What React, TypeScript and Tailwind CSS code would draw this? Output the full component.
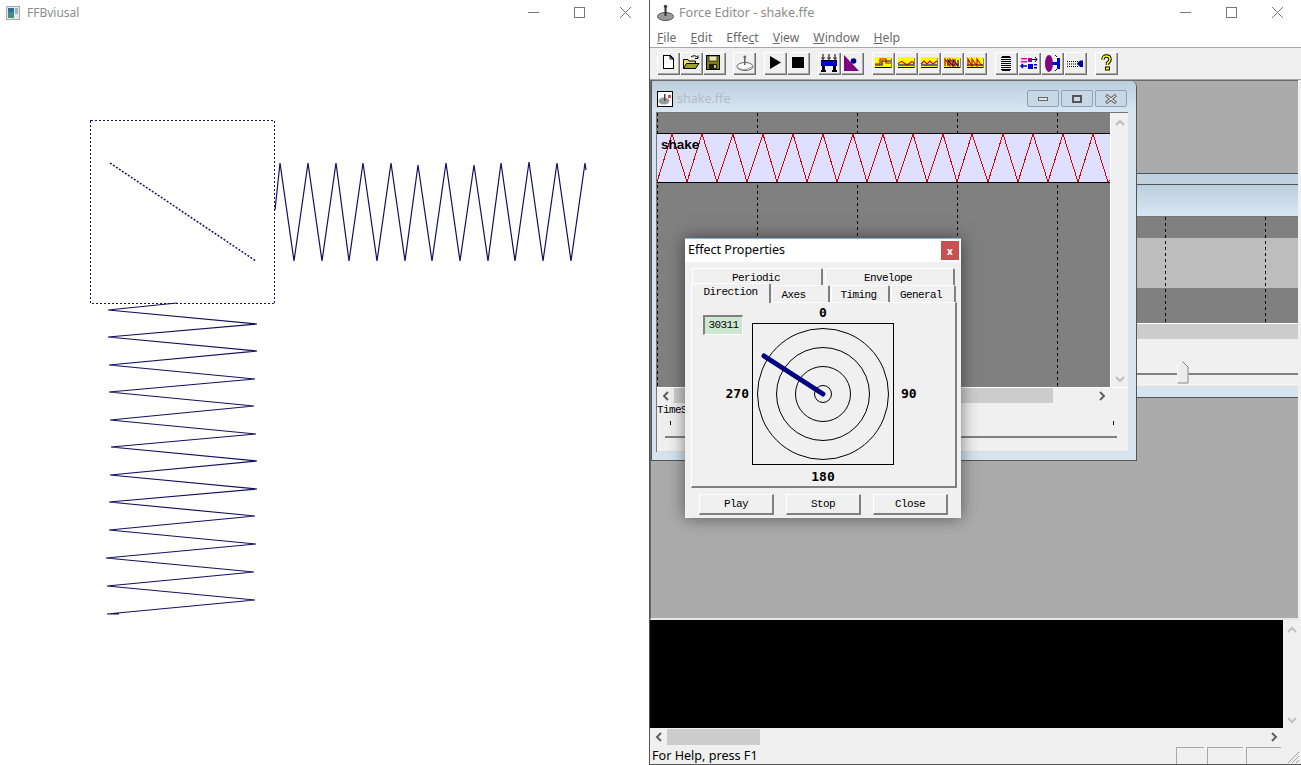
import React from "react";

const zigV: [number, number][] = [[177,303],[108,310],[257,324],[108,337],[257,351],[109,365],[255,379],[109,392],[254,406],[110,420],[256,434],[111,447],[257,461],[110,475],[257,489],[109,502],[255,516],[109,530],[256,544],[106,558],[254,572],[107,586],[255,600],[107,614],[119,614]];
const zigH: [number, number][] = [[275,210],[280,163],[294,261],[308,163],[322,261],[336,163],[349,261],[363,163],[377,261],[391,163],[405,261],[418,165],[432,261],[446,163],[460,261],[474,165],[488,261],[501,163],[515,261],[529,162],[543,261],[557,163],[571,261],[585,163],[586,170]];
const pts = (a: [number, number][]) => a.map((p) => p.join(",")).join(" ");

function tri() {
  const peaks = [15,45,76,106,136,166,196,226,256,286,315,346,376,406,436];
  const troughs = [30,60,90,120,150,180,210,240,270,300,331,361,391,421,451];
  const out: string[] = ["0,48"];
  peaks.forEach((p, i) => { out.push(`${p},0`); out.push(`${troughs[i]},48`); });
  out.push("453,46");
  return out.join(" ");
}

const Caption = () => (
  <div className="flex items-center mr-[1px]">
    <svg width="46" height="26" viewBox="0 0 46 26"><line x1="18" y1="12.5" x2="29" y2="12.5" stroke="#777" /></svg>
    <svg width="46" height="26" viewBox="0 0 46 26"><rect x="18.5" y="7.5" width="10" height="10" fill="none" stroke="#777" /></svg>
    <svg width="46" height="26" viewBox="0 0 46 26"><path d="M18 7 L29 18 M29 7 L18 18" stroke="#777" /></svg>
  </div>
);

const Chev = ({ dir, color }: { dir: "u" | "d" | "l" | "r"; color: string }) => {
  const d = { u: "M1 7 L5 3 L9 7", d: "M1 3 L5 7 L9 3", l: "M7 1 L3 5 L7 9", r: "M3 1 L7 5 L3 9" }[dir];
  return <svg width="10" height="10" viewBox="0 0 10 10"><path d={d} fill="none" stroke={color} strokeWidth="2" /></svg>;
};

const Tool = ({ children, ml }: { children: React.ReactNode; ml?: string }) => (
  <div className={`w-[23px] h-[23px] shrink-0 bg-[#f0f0f0] shadow-[inset_1px_1px_0_#ffffff,inset_-1px_-1px_0_#707070,inset_-2px_-2px_0_#a8a8a8] ${ml ?? ""}`}>
    <svg width="23" height="23" viewBox="0 0 23 23">{children}</svg>
  </div>
);

const Wave = ({ top, bottom }: { top: string; bottom: string }) => (
  <g transform="translate(0,-1)">
    <rect x="3" y="6" width="16" height="10" fill="#ffff00" />
    <rect x="3" y="16" width="16" height="1" fill="#000" />
    <rect x="19" y="7" width="1" height="10" fill="#808080" />
    <path d={bottom} fill="none" stroke="#0000d0" strokeWidth="1.2" />
    <path d={top} fill="none" stroke="#d00000" strokeWidth="1.2" />
  </g>
);

const Tab = ({ label, cls }: { label: string; cls: string }) => (
  <div className={`${cls} flex items-center justify-center bg-[#f0f0f0] border-t border-l border-white border-r-2 border-r-[#808080] rounded-t-[2px] font-['Liberation_Mono',monospace] text-[11px] tracking-[-0.6px] text-black`}>
    {label}
  </div>
);

const DlgBtn = ({ label }: { label: string }) => (
  <div className="w-[75px] h-[21px] pt-[1px] flex items-center justify-center bg-[#f0f0f0] border-t border-l border-white border-r-2 border-b-2 border-r-[#808080] border-b-[#808080] font-['Liberation_Mono',monospace] text-[11px] tracking-[-0.6px] text-black">
    {label}
  </div>
);

const Mdib = ({ children }: { children: React.ReactNode }) => (
  <div className="w-[32px] h-[17px] flex items-center justify-center rounded-[2px] border border-[#8fa3b8] bg-[#c6d7e5]">{children}</div>
);

export default function App() {
  return (
    <div className="flex w-[1301px] h-[765px] overflow-hidden bg-white font-['Noto_Sans',sans-serif]">
      {/* Left window */}
      <div className="w-[649px] h-full shrink-0 flex flex-col bg-white">
        <div className="h-[26px] shrink-0 flex items-center">
          <svg className="ml-[6px]" width="14" height="14" viewBox="0 0 14 14">
            <rect x="0.5" y="0.5" width="13" height="13" fill="#e8e8e8" stroke="#a8a8a8" />
            <rect x="2" y="2" width="6" height="10" fill="#3f8f86" />
            <rect x="2" y="2" width="6" height="4" fill="#2f6f9f" />
            <rect x="9" y="2" width="3" height="6" fill="#9fb4c8" />
          </svg>
          <span className="ml-[7px] text-[12px] leading-none text-[#8c8c8c]">FFBviusal</span>
          <div className="ml-auto"><Caption /></div>
        </div>
        <svg className="block" width="649" height="739" viewBox="0 26 649 739">
          <rect x="90.5" y="120.5" width="184" height="183" fill="none" stroke="#14105e" strokeDasharray="2 2" shapeRendering="crispEdges" />
          <line x1="110" y1="163" x2="256" y2="261" stroke="#14105e" strokeWidth="1.5" strokeDasharray="2 1.6" />
          <polyline points={pts(zigH)} fill="none" stroke="#14105e" strokeWidth="1.2" />
          <polyline points={pts(zigV)} fill="none" stroke="#14105e" strokeWidth="1.2" />
        </svg>
      </div>

      {/* Right window */}
      <div className="w-[652px] h-full shrink-0 flex flex-col border-l border-b border-[#555555] bg-[#f0f0f0]">
        <div className="h-[26px] shrink-0 flex items-center bg-white">
          <svg className="ml-[7px]" width="18" height="18" viewBox="0 0 18 18">
            <ellipse cx="8.5" cy="12.5" rx="8" ry="4" fill="#9a9a9a" stroke="#555" />
            <rect x="7.5" y="2" width="2" height="10" fill="#333" />
            <circle cx="8.5" cy="2.5" r="1.8" fill="#444" />
          </svg>
          <span className="ml-[4px] text-[12.6px] leading-none text-[#8c8c8c]">Force Editor - shake.ffe</span>
          <div className="ml-auto"><Caption /></div>
        </div>
        <div className="h-[21px] shrink-0 flex items-center bg-white pl-[7px] pt-[4px] gap-[14px] text-[12.2px] leading-none text-[#6a6a6a]">
          <span><u>F</u>ile</span>
          <span><u>E</u>dit</span>
          <span>Effe<u>c</u>t</span>
          <span><u>V</u>iew</span>
          <span><u>W</u>indow</span>
          <span><u>H</u>elp</span>
        </div>
        <div className="h-[33px] shrink-0 flex items-center pl-[7px] bg-[#f0f0f0] border-t border-b border-[#a8a8a8]">
          <Tool>
            <path d="M6.5 3.5 H13 L16.5 7 V16.5 H6.5 Z" fill="#fff" stroke="#000" shapeRendering="crispEdges" />
            <path d="M13 3.5 V7 H16.5" fill="none" stroke="#000" />
          </Tool>
          <Tool>
            <path d="M3.5 7.5 H8 L9 9 H15.5 V16.5 H3.5 Z" fill="#e6e066" stroke="#000" />
            <path d="M3.5 16.5 L6.5 11.5 H19 L15.5 16.5 Z" fill="#a0a030" stroke="#000" />
            <path d="M11 5 Q15 2 18 6 M18 3.5 V6.5 H15" fill="none" stroke="#000" />
          </Tool>
          <Tool>
            <rect x="3.5" y="3.5" width="13" height="14" fill="#808000" stroke="#000" />
            <rect x="6" y="4" width="8" height="5" fill="#e8e8c8" stroke="#000" strokeWidth="0.6" />
            <rect x="6" y="12" width="8" height="5" fill="#202000" />
            <rect x="11" y="13" width="2" height="3" fill="#c0c0a0" />
          </Tool>
          <Tool ml="ml-[7px]">
            <ellipse cx="12" cy="14.5" rx="8" ry="4" fill="#fff" stroke="#666" />
            <rect x="11" y="5" width="1.5" height="8" fill="#666" />
            <circle cx="11.8" cy="5" r="1.4" fill="#666" />
            <path d="M4 15 Q10 20 19 15" fill="none" stroke="#999" />
          </Tool>
          <Tool ml="ml-[8px]">
            <path d="M6 4 L17 10.5 L6 17 Z" fill="#000" />
          </Tool>
          <Tool>
            <rect x="5" y="5" width="12" height="11" fill="#000" />
          </Tool>
          <Tool ml="ml-[8px]">
            <path d="M5 2 V7 M11 2 V7 M17 2 V7 M3.5 5.5 L5 7.5 L6.5 5.5 M9.5 5.5 L11 7.5 L12.5 5.5 M15.5 5.5 L17 7.5 L18.5 5.5" fill="none" stroke="#000" />
            <rect x="3" y="9" width="16" height="5" fill="#0000d0" />
            <rect x="3" y="8" width="16" height="1" fill="#000" />
            <rect x="4" y="14" width="3" height="4" fill="#000" />
            <rect x="15" y="14" width="3" height="4" fill="#000" />
            <rect x="3" y="18" width="5" height="2" fill="#000" />
            <rect x="14" y="18" width="5" height="2" fill="#000" />
          </Tool>
          <Tool>
            <path d="M3 3 L18 19 H3 Z" fill="#800080" />
            <circle cx="12.5" cy="9" r="2.8" fill="#000090" />
          </Tool>
          <Tool ml="ml-[8px]">
            <Wave top="M3 13 H8 V8 H14 V12 H19" bottom="M3 14 H10 V10 H19" />
          </Tool>
          <Tool>
            <Wave top="M3 13 Q6 9 9 12 T15 12 T19 13" bottom="M3 14 H19" />
          </Tool>
          <Tool>
            <Wave top="M3 13 L6 10 L9 13 L12 10 L15 13 L19 10" bottom="M3 14 H19" />
          </Tool>
          <Tool>
            <Wave top="M4 15 V8 L9 15 V8 L14 15 V8" bottom="M7 15 V9 L12 15 V9 L17 15 V9" />
          </Tool>
          <Tool>
            <Wave top="M4 15 V8 L8 15 V8 L13 15 V8 L18 15" bottom="M3 14 H19" />
          </Tool>
          <Tool ml="ml-[8px]">
            <path d="M6 5.5 H16 M6 7.5 H16 M6 9.5 H16 M6 11.5 H16 M6 13.5 H16 M6 15.5 H16 M6 17.5 H16" stroke="#000" strokeWidth="1.2" />
            <path d="M7 4.5 H15 M7 18.5 H15" stroke="#000" />
          </Tool>
          <Tool>
            <rect x="3" y="6" width="6" height="1.5" fill="#f000d0" />
            <rect x="3" y="9" width="6" height="1.5" fill="#f000d0" />
            <rect x="10" y="6" width="4" height="4" fill="#a000a0" />
            <path d="M14 7.5 H19 M17 5 L19 7.5 L17 10" fill="none" stroke="#000" />
            <rect x="10" y="12" width="5" height="5" fill="#0000d0" />
            <path d="M3 14 H9 M5 12 L3 14 L5 16" fill="none" stroke="#0000d0" strokeWidth="1.5" />
            <rect x="16" y="12" width="3" height="1.5" fill="#0000d0" />
            <rect x="16" y="15" width="3" height="1.5" fill="#000" />
          </Tool>
          <Tool>
            <ellipse cx="8" cy="11.5" rx="4" ry="8.5" fill="#800080" />
            <path d="M11 10 H16 V6 H19 V17 H16 V13 H11 Z" fill="#0000d0" />
            <path d="M14 3 L16 5 M14 19 L16 17" stroke="#0000d0" />
          </Tool>
          <Tool>
            <path d="M3 9.5 H14 M3 12 H14 M3 14.5 H14" stroke="#000" strokeDasharray="1 1" />
            <path d="M13 11.5 L16 8.5 H19 V15 H16 Z" fill="#0000a0" />
          </Tool>
          <Tool ml="ml-[8px]">
            <path d="M8 7.5 Q8 4 11.5 4 Q15 4 15 7.5 Q15 9.5 12.5 11 V13" fill="none" stroke="#000" strokeWidth="3.4" />
            <path d="M8 7.5 Q8 4 11.5 4 Q15 4 15 7.5 Q15 9.5 12.5 11 V13" fill="none" stroke="#ffff00" strokeWidth="1.6" />
            <rect x="10.5" y="15" width="4" height="3" fill="#ffff00" stroke="#000" />
          </Tool>
        </div>

        {/* MDI area */}
        <div className="relative h-[540px] w-[648px] shrink-0 overflow-hidden bg-[#ababab] border-t border-l border-t-[#696969] border-l-[#696969] border-b-2 border-b-[#e8e8e8]">
          {/* back child */}
          <div className="absolute left-[249px] top-[92px] w-[398px] h-[225px] flex flex-col border-t border-b border-[#555555] bg-[#d6e4f2]">
            <div className="h-[11px] shrink-0 bg-[#c0d1df] border-b border-[#555555]" />
            <div className="h-[31px] shrink-0 bg-gradient-to-b from-[#bccedd] to-[#d8e6f3]" />
            <div className="relative h-[107px] shrink-0 bg-[#808080] border-t border-[#777777] flex flex-col">
              <div className="h-[21px] shrink-0" />
              <div className="h-[50px] shrink-0 bg-[#bdbdbd]" />
              <svg className="absolute inset-0" width="398" height="107">
                <path d="M265.5 0 V107 M365.5 0 V107" stroke="#000" strokeDasharray="3 3" shapeRendering="crispEdges" />
              </svg>
            </div>
            <div className="h-[16px] shrink-0 bg-[#cdcdcd] border-t border-white" />
            <div className="relative h-[48px] shrink-0 bg-[#f0f0f0] border-b border-[#dcdcdc]">
              <div className="mt-[34px] h-[2px] bg-[#808080]" />
              <svg className="absolute left-[277px] top-[22px]" width="12" height="23" viewBox="0 0 12 23">
                <path d="M0.5 6 L5.5 0.5 L11 6 V22 H0.5 Z" fill="#ececec" stroke="#fff" />
                <path d="M5.5 0.5 L11 6 V22 H0.5" fill="none" stroke="#808080" />
              </svg>
            </div>
          </div>

          {/* front child */}
          <div className="absolute left-0 top-0 w-[486px] h-[380px] flex flex-col border-l border-r border-b border-[#555555] rounded-tr-[6px] bg-[#d6e4f2]">
            <div className="h-[31px] shrink-0 flex items-start bg-gradient-to-b from-[#bccedd] to-[#d8e6f3] rounded-tr-[6px]">
              <svg className="ml-[5px] mt-[10px]" width="16" height="16" viewBox="0 0 16 16">
                <rect x="0.5" y="0.5" width="15" height="15" fill="#fff" stroke="#000" />
                <ellipse cx="7" cy="10" rx="5.5" ry="3.5" fill="#999" />
                <rect x="7" y="3" width="1.5" height="7" fill="#444" />
                <rect x="11" y="4" width="3" height="3" fill="#d85050" />
              </svg>
              <span className="ml-[4px] mt-[11px] text-[12.5px] leading-[14px] text-[#b4bcc4]">shake.ffe</span>
              <div className="ml-auto mr-[9px] mt-[9px] flex gap-[2px]">
                <Mdib><div className="w-[10px] h-[4px] bg-[#e4e4e4] border border-[#666]" /></Mdib>
                <Mdib><div className="w-[10px] h-[8px] border-2 border-[#555]" /></Mdib>
                <Mdib>
                  <svg width="12" height="10" viewBox="0 0 12 10">
                    <path d="M1 1 L11 9 M11 1 L1 9" stroke="#555" strokeWidth="3" />
                    <path d="M1.5 1.5 L10.5 8.5 M10.5 1.5 L1.5 8.5" stroke="#e8e8e8" strokeWidth="1.2" />
                  </svg>
                </Mdib>
              </div>
            </div>
            <div className="h-[340px] shrink-0 ml-[4px] mr-[8px] flex flex-col bg-[#f0f0f0] border-t border-l border-[#777777]">
              <div className="h-[274px] shrink-0 flex">
                <div className="relative w-[453px] h-full shrink-0 bg-[#808080] pt-[20px]">
                  <svg className="absolute inset-0" width="453" height="274">
                    <path d="M0.5 0 V274 M100.5 0 V274 M200.5 0 V274 M300.5 0 V274 M400.5 0 V274" stroke="#000" strokeDasharray="3 3" shapeRendering="crispEdges" />
                  </svg>
                  <div className="relative h-[50px] bg-[#dfdfff] border-y border-black">
                    <svg className="absolute inset-0 overflow-visible" width="453" height="48">
                      <polyline points={tri()} fill="none" stroke="#e00000" shapeRendering="crispEdges" />
                    </svg>
                    <span className="absolute left-[4px] top-[3px] font-['Liberation_Sans',sans-serif] font-bold text-[13.5px] leading-[16px] text-black">shake</span>
                  </div>
                </div>
                <div className="flex-1 flex flex-col items-center justify-between pt-[5px] pb-[3px] border-l border-white">
                  <Chev dir="u" color="#c0c0c0" />
                  <Chev dir="d" color="#c0c0c0" />
                </div>
              </div>
              <div className="h-[16px] shrink-0 flex items-center border-t border-white">
                <div className="w-[17px] flex justify-center shrink-0"><Chev dir="l" color="#606060" /></div>
                <div className="w-[379px] h-full shrink-0 bg-[#cdcdcd]" />
                <div className="w-[57px] flex justify-end pr-[3px] shrink-0"><Chev dir="r" color="#606060" /></div>
              </div>
              <div className="flex-1 flex flex-col border-b border-[#dcdcdc]">
                <span className="h-[14px] font-['Liberation_Mono',monospace] text-[11px] leading-[14px] tracking-[-0.6px] text-black">TimeS</span>
                <div className="mt-[4px] h-[4px] flex justify-between pl-[13px] pr-[14px]">
                  <div className="w-px h-[4px] bg-black" />
                  <div className="w-px h-[4px] bg-black" />
                </div>
                <div className="mt-[11px] ml-[8px] mr-[11px] h-[2px] bg-[#808080]" />
              </div>
            </div>
            <div className="flex-1" />
          </div>

          {/* Effect Properties dialog */}
          <div className="absolute left-[34px] top-[157px] w-[276px] h-[280px] flex flex-col bg-[#f0f0f0] border-t border-[#7fb8e6] shadow-[0_0_16px_rgba(0,0,0,0.5)]">
            <div className="h-[23px] shrink-0 flex items-center bg-white">
              <span className="ml-[3px] text-[12.5px] leading-none text-black">Effect Properties</span>
              <div className="ml-auto mr-[2px] w-[18px] h-[19px] flex items-center justify-center bg-[#c75050] text-white font-bold text-[10px] leading-none">x</div>
            </div>
            <div className="flex-1 flex flex-col pl-[6px] pt-[6px]">
              <div className="flex gap-[2px] pl-[1px]">
                <Tab label="Periodic" cls="w-[131px] h-[17px] pt-[2px] pr-[2px]" />
                <Tab label="Envelope" cls="w-[130px] h-[17px] pt-[2px] pr-[3px]" />
              </div>
              <div className="relative flex items-end h-[17px]">
                <div className="flex items-end gap-[1px]">
                  <Tab label="Direction" cls="w-[80px] h-[20px] -mb-[1px] pb-[2px]" />
                  <Tab label="Axes" cls="w-[58px] h-[17px] pt-[2px] pr-[14px]" />
                  <Tab label="Timing" cls="w-[59px] h-[17px] pt-[2px] pr-[3px]" />
                  <Tab label="General" cls="w-[65px] h-[17px] pt-[2px] pr-[4px]" />
                </div>
              </div>
              <div className="w-[266px] h-[186px] shrink-0 flex border-t border-l border-white border-r-2 border-b-2 border-r-[#808080] border-b-[#808080]">
                <div className="w-[60px] shrink-0 flex flex-col">
                  <div className="ml-[11px] mt-[12px] w-[40px] h-[20px] flex items-center justify-center bg-[#cde8d0] border-t-2 border-l-2 border-r border-b border-t-[#808080] border-l-[#808080] border-r-white border-b-white font-['Liberation_Mono',monospace] text-[11px] tracking-[-0.6px] text-black">30311</div>
                  <div className="mt-[51px] pr-[3px] text-right font-['DejaVu_Sans_Mono',monospace] font-bold text-[13px] leading-[16px] text-black">270</div>
                </div>
                <div className="w-[142px] shrink-0 flex flex-col items-center">
                  <div className="h-[20px] flex items-center font-['DejaVu_Sans_Mono',monospace] font-bold text-[13px] leading-none text-black">0</div>
                  <svg className="block shrink-0" width="142" height="142" viewBox="0 0 142 142">
                    <rect x="0.5" y="0.5" width="141" height="141" fill="none" stroke="#000" />
                    <g fill="none" stroke="#000">
                      <circle cx="71" cy="71" r="65.5" />
                      <circle cx="71" cy="71" r="46.5" />
                      <circle cx="71" cy="71" r="27.5" />
                      <circle cx="71" cy="71" r="8.5" />
                    </g>
                    <line x1="71" y1="71" x2="12" y2="33" stroke="#000080" strokeWidth="5" strokeLinecap="round" />
                  </svg>
                  <div className="h-[22px] pt-[2px] flex items-center font-['DejaVu_Sans_Mono',monospace] font-bold text-[13px] leading-none text-black">180</div>
                </div>
                <div className="flex-1 pt-[83px] pl-[7px] font-['DejaVu_Sans_Mono',monospace] font-bold text-[13px] leading-[16px] text-black">90</div>
              </div>
              <div className="mt-[6px] ml-[8px] flex gap-[12px]">
                <DlgBtn label="Play" />
                <DlgBtn label="Stop" />
                <DlgBtn label="Close" />
              </div>
            </div>
          </div>
        </div>

        {/* Console */}
        <div className="h-[108px] shrink-0 flex">
          <div className="w-[633px] h-full shrink-0 bg-black" />
          <div className="flex-1 flex flex-col items-center justify-between pt-[5px] pb-[3px]">
            <Chev dir="u" color="#c0c0c0" />
            <Chev dir="d" color="#c0c0c0" />
          </div>
        </div>
        <div className="h-[18px] shrink-0 flex items-center">
          <div className="w-[17px] shrink-0 flex justify-center"><Chev dir="l" color="#606060" /></div>
          <div className="w-[93px] h-[16px] shrink-0 bg-[#cdcdcd]" />
          <div className="ml-auto mr-[22px]"><Chev dir="r" color="#606060" /></div>
        </div>
        <div className="h-[18px] shrink-0 flex items-center pl-[2px]">
          <span className="pt-[2px] text-[12.6px] leading-none text-black">For Help, press F1</span>
          <div className="ml-auto h-full pt-[1px] flex gap-[3px] items-stretch">
            <div className="w-[28px] border-t border-l border-[#a8a8a8]" />
            <div className="w-[36px] border-t border-l border-[#a8a8a8]" />
            <div className="w-[35px] border-t border-l border-[#a8a8a8]" />
          </div>
          <svg className="self-end ml-[3px] mr-[1px]" width="16" height="16" viewBox="0 0 16 16">
            <path d="M15 4 L4 15 M15 8 L8 15 M15 12 L12 15" stroke="#a0a0a0" />
          </svg>
        </div>
      </div>
    </div>
  );
}
